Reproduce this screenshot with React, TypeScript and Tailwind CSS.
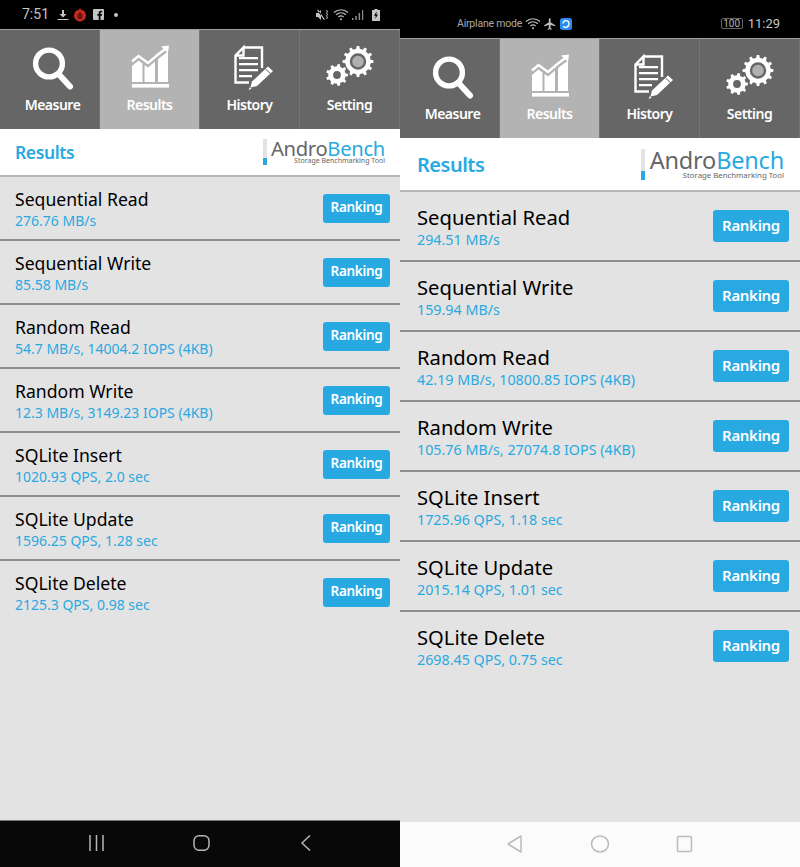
import type { ReactNode } from "react"

const font = "font-['Noto_Sans',sans-serif]"

// toothed outline for the settings gears
function gearPath(cx: number, cy: number, outer: number, inner: number, teeth: number) {
  const pts: string[] = []
  const step = (Math.PI * 2) / teeth
  for (let i = 0; i < teeth; i++) {
    const a = i * step
    const w = step * 0.2
    ;[
      [a - w * 1.3, inner],
      [a - w * 0.8, outer],
      [a + w * 0.8, outer],
      [a + w * 1.3, inner],
    ].forEach(([t, r]) => {
      pts.push(`${(cx + Math.cos(t) * r).toFixed(2)},${(cy + Math.sin(t) * r).toFixed(2)}`)
    })
  }
  return `M${pts.join("L")}Z`
}

function TabIcon({ children }: { children: ReactNode }) {
  return (
    <svg viewBox="0 0 100 64" className="h-16 w-[100px] shrink-0 text-white">
      {children}
    </svg>
  )
}

const MeasureIcon = () => (
  <TabIcon>
    <circle cx="49" cy="33.5" r="13.4" fill="none" stroke="currentColor" strokeWidth="5.4" />
    <path d="M59 44.5 L70 56.5" stroke="currentColor" strokeWidth="6" strokeLinecap="round" />
  </TabIcon>
)

const ResultsIcon = () => (
  <TabIcon>
    <path d="M32 31.5 L38.5 26 L48 33 L58 24.5 L66 18.5" fill="none" stroke="currentColor" strokeWidth="2.4" />
    <path d="M61 16.5 L69 15.5 L68 23 Z" fill="currentColor" />
    <path
      d="M32 36 L38.5 30.5 L42.5 33.5 V52 H32 Z M44.5 35 L48 37.5 L55 31.5 V52 H44.5 Z M58 29 L68 21.5 V52 H58 Z"
      fill="currentColor"
    />
    <rect x="32" y="54" width="37" height="3.6" fill="currentColor" />
  </TabIcon>
)

const HistoryIcon = () => (
  <TabIcon>
    <path
      d="M43.5 17.5 H62 V38 M49 52.5 H35.5 V25.5 L43.5 17.5 V25.5 H35.5"
      fill="none"
      stroke="currentColor"
      strokeWidth="2.4"
    />
    <path d="M39 27h19v2.2H39zM39 33h19v2.2H39zM39 39h19v2.2H39zM39 45h13v2.2H39z" fill="currentColor" />
    <path d="M68 36.5 L73 41 L57 56 L50.5 57.5 L52 51.5 Z" fill="currentColor" />
    <path d="M50 57 L48.5 60 L51.5 58.8 Z" fill="currentColor" />
    <path d="M65.5 39 L70.5 43.5" stroke="#666666" strokeWidth="1" />
  </TabIcon>
)

const SettingIcon = () => (
  <TabIcon>
    <path d={gearPath(58, 31.5, 15.5, 12.8, 12)} fill="currentColor" />
    <circle cx="58" cy="31.5" r="7" fill="#b0b0b0" stroke="#666666" strokeWidth="2.4" />
    <circle cx="37" cy="45" r="12.4" fill="#666666" />
    <path d={gearPath(37, 45, 11, 8.8, 9)} fill="currentColor" />
    <circle cx="37" cy="45" r="3.9" fill="#666666" />
  </TabIcon>
)

const tabs = [
  { label: "Measure", icon: MeasureIcon, labelClass: "pl-[6px]" },
  { label: "Results", icon: ResultsIcon, active: true, labelClass: "" },
  { label: "History", icon: HistoryIcon, labelClass: "" },
  { label: "Setting", icon: SettingIcon, labelClass: "" },
]

function TabBar() {
  return (
    <div className="flex h-[100px] shrink-0 border-t border-[#a0a0a0] bg-[#666666]">
      {tabs.map(({ label, icon: Icon, active, labelClass }) => (
        <div
          key={label}
          className={`flex w-[100px] flex-col items-center border-r border-[#757575] ${active ? "bg-[#b3b3b3]" : ""}`}
        >
          <Icon />
          <span className={`mt-[1px] text-[14px] leading-[20px] font-semibold tracking-[-0.5px] text-white ${labelClass}`}>
            {label}
          </span>
        </div>
      ))}
    </div>
  )
}

function Row({ title, value, large, last }: { title: string; value: string; large: boolean; last: boolean }) {
  return (
    <div
      className={`flex items-center justify-between border-b-2 ${last ? "border-transparent" : "border-[#8e8e8e]"} ${
        large ? "h-[70px] pr-[11px] pl-[17px]" : "h-16 pr-[10px] pl-[15px]"
      }`}
    >
      <div className="mt-[1px]">
        <div className={large ? "text-[20.2px] leading-[26px] text-black" : "text-[17.6px] leading-[23px] text-black"}>
          {title}
        </div>
        <div
          className={
            large ? "text-[14.3px] leading-[20px] text-[#29a9e1]" : "text-[14px] leading-[19px] text-[#29a9e1]"
          }
        >
          {value}
        </div>
      </div>
      <div
        className={`flex items-center justify-center rounded-[3px] bg-[#29a9e1] pb-[2px] font-semibold tracking-[-0.3px] text-white ${
          large ? "h-8 w-[76px] text-[15px]" : "h-[29px] w-[67px] text-[13.5px]"
        }`}
      >
        Ranking
      </div>
    </div>
  )
}

function Logo({ large }: { large: boolean }) {
  return (
    <div className="flex">
      <div className={`flex flex-col bg-[#e3e3e3] ${large ? "mr-[5px] h-[31px] w-1" : "mr-1 h-[26px] w-1"}`}>
        <div className={`mt-auto w-full bg-[#29a9e1] ${large ? "h-[9px]" : "h-[7px]"}`} />
      </div>
      <div className="flex flex-col items-end">
        <div
          className={`text-[#29a9e1] ${
            large ? "text-[23.5px] leading-[22px] tracking-[-0.2px]" : "text-[20.2px] leading-[18px] tracking-[-0.3px]"
          }`}
        >
          <span className="text-[#666666]">Andro</span>Bench
        </div>
        <div className={`text-[#666666] ${large ? "text-[7.8px] leading-[9px]" : "text-[7px] leading-[8px]"}`}>
          Storage Benchmarking Tool
        </div>
      </div>
    </div>
  )
}

function Wifi() {
  return (
    <svg viewBox="0 0 16 13" className="h-[13px] w-4" fill="none" stroke="#bdbdbd" strokeWidth="1.2">
      <path d="M1 4.500 C5 .8 11 .8 15 4.500" />
      <path d="M3.200 6.800 C6 4.200 10 4.200 12.800 6.800" />
      <path d="M5.400 9 C7 7.600 9 7.600 10.600 9" />
      <circle cx="8" cy="11.200" r="1" fill="#bdbdbd" stroke="none" />
    </svg>
  )
}

function LeftStatus() {
  return (
    <div className="flex h-[29px] shrink-0 items-center bg-black pr-5 pl-[22px] text-[14px] text-[#c4c4c4]">
      <span className="font-['Roboto',sans-serif]">7:51</span>
      <svg viewBox="0 0 12 12" className="ml-[8px] h-3 w-3" fill="#c4c4c4">
        <path d="M5 1h2v4h2.500L6 8.400 2.500 5H5zM.5 10h11v1H.5z" />
      </svg>
      <svg viewBox="0 0 14 14" className="ml-[4px] h-[14px] w-[14px]">
        <circle cx="7" cy="7.500" r="6" fill="#c62a1e" />
        <path d="M4.500 11V6.500L7 4l2.500 2.500V11z" fill="#6d120c" />
        <path d="M7 0.500v2" stroke="#c62a1e" strokeWidth="1.500" />
      </svg>
      <svg viewBox="0 0 11 11" className="ml-[6px] h-[11px] w-[11px]">
        <rect width="11" height="11" rx="1" fill="#c4c4c4" />
        <path
          d="M7.500 11V6.800h1.400l.2-1.700H7.500V4c0-.5.200-.8.800-.8h.9V1.700H8C6.500 1.700 5.700 2.600 5.700 4v1.100H4.400v1.700h1.300V11z"
          fill="#000"
        />
      </svg>
      <span className="ml-[10px] h-1 w-1 rounded-full bg-[#c4c4c4]" />
      <div className="ml-auto flex items-center">
        <svg viewBox="0 0 13 12" className="h-3 w-[13px]" fill="#c4c4c4">
          <path d="M0 4h2l3-3v10L2 8H0zM1 1l7 10 1-.6-7-10zM10 1l1 1.500-1 1.500 1 1.500-1 1.500 1 1.500-1 1.500h1l1-1.500-1-1.500 1-1.500-1-1.500 1-1.500-1-1.500z" />
        </svg>
        <div className="ml-[4px]">
          <Wifi />
        </div>
        <svg viewBox="0 0 12 12" className="ml-[3px] h-3 w-3" fill="#8a8a8a">
          <path d="M0 9h1.500v2H0zM3.300 7h1.500v4H3.300zM6.600 4h1.500v7H6.600zM10 1h1.200v10H10z" />
        </svg>
        <svg viewBox="0 0 8 12" className="ml-2 h-3 w-2">
          <path d="M2.500 0h3v1H8v11H0V1h2.500z" fill="#c4c4c4" />
          <path d="M4.800 2.200 2 6.800h1.800L3.200 10 6 5.400H4.200z" fill="#000" />
        </svg>
      </div>
    </div>
  )
}

function RightStatus() {
  return (
    <div className="flex h-[38px] shrink-0 items-center bg-black pt-[9px] pr-5 pl-[57px] text-[#a8a8a8]">
      <span className="font-['Roboto',sans-serif] text-[10.5px] tracking-[-0.2px]">Airplane mode</span>
      <div className="ml-[3px]">
        <Wifi />
      </div>
      <svg viewBox="0 0 24 24" className="ml-[2px] h-[14px] w-[14px]" fill="#bdbdbd">
        <path d="M21 16v-2l-8-5V3.500a1.500 1.500 0 0 0-3 0V9l-8 5v2l8-2.500V19l-2 1.500V22l3.500-1 3.500 1v-1.500L13 19v-5.500z" />
      </svg>
      <svg viewBox="0 0 12 12" className="ml-[3px] h-3 w-3">
        <rect width="12" height="12" rx="2.500" fill="#2a8cf0" />
        <path d="M3 5.500a3 3 0 1 1 4 3M3 8.500c2 1.500 4 1 5.500-.5" fill="none" stroke="#fff" strokeWidth="1.300" />
      </svg>
      <div className="ml-auto flex items-center">
        <span className="flex h-[11px] w-[22px] items-center justify-center rounded-[2px] border border-[#666666] font-['Roboto',sans-serif] text-[10px] leading-none text-[#b5b5b5]">
          100
        </span>
        <span className="ml-[5px] font-['Roboto',sans-serif] text-[13px] text-[#c4c4c4]">11:29</span>
      </div>
    </div>
  )
}

function LeftNav() {
  return (
    <div className="mt-auto flex h-[47px] shrink-0 items-center border-t border-[#777777] bg-[#080808] pb-[2px]">
      <svg viewBox="0 0 400 16" className="h-4 w-[400px]" fill="none" stroke="#b5b5b5" strokeWidth="1.500">
        <path d="M90 0v16M96.500 0v16M103 0v16" />
        <rect x="194" y=".8" width="15" height="14.500" rx="5" />
        <path d="M310 .5 302 8l8 7.500" />
      </svg>
    </div>
  )
}

function RightNav() {
  return (
    <div className="mt-auto flex h-[45px] shrink-0 items-center bg-[#fbfbfb] pb-[2px]">
      <svg viewBox="0 0 400 18" className="h-[18px] w-[400px]" fill="none" stroke="#bcbcbc" strokeWidth="1.500">
        <path d="M121 1 108 9l13 8z" strokeLinejoin="round" />
        <ellipse cx="200" cy="9" rx="8.500" ry="8" />
        <rect x="277.500" y="1.500" width="14" height="15" rx="1" />
      </svg>
    </div>
  )
}

const leftRows = [
  ["Sequential Read", "276.76 MB/s"],
  ["Sequential Write", "85.58 MB/s"],
  ["Random Read", "54.7 MB/s, 14004.2 IOPS (4KB)"],
  ["Random Write", "12.3 MB/s, 3149.23 IOPS (4KB)"],
  ["SQLite Insert", "1020.93 QPS, 2.0 sec"],
  ["SQLite Update", "1596.25 QPS, 1.28 sec"],
  ["SQLite Delete", "2125.3 QPS, 0.98 sec"],
]

const rightRows = [
  ["Sequential Read", "294.51 MB/s"],
  ["Sequential Write", "159.94 MB/s"],
  ["Random Read", "42.19 MB/s, 10800.85 IOPS (4KB)"],
  ["Random Write", "105.76 MB/s, 27074.8 IOPS (4KB)"],
  ["SQLite Insert", "1725.96 QPS, 1.18 sec"],
  ["SQLite Update", "2015.14 QPS, 1.01 sec"],
  ["SQLite Delete", "2698.45 QPS, 0.75 sec"],
]

function Phone({ large, rows }: { large: boolean; rows: string[][] }) {
  return (
    <div className="flex h-[867px] w-[400px] flex-col bg-[#e3e3e3]">
      {large ? <RightStatus /> : <LeftStatus />}
      <TabBar />
      <div
        className={`flex shrink-0 items-center justify-between border-b-2 border-[#b5b5b5] bg-white ${
          large ? "h-[54px] pr-[16px] pl-[17px]" : "h-[48px] pr-[15px] pl-[15px]"
        }`}
      >
        <span
          className={`font-semibold text-[#29a9e1] ${
            large ? "pt-[1px] text-[20px] tracking-[-0.5px]" : "text-[17.5px] tracking-[-0.4px]"
          }`}
        >
          Results
        </span>
        <Logo large={large} />
      </div>
      {rows.map(([title, value], index) => (
        <Row key={title} title={title} value={value} large={large} last={index === rows.length - 1} />
      ))}
      {large ? <RightNav /> : <LeftNav />}
    </div>
  )
}

export default function App() {
  return (
    <div className={`flex h-[867px] w-[800px] overflow-hidden ${font}`}>
      <Phone large={false} rows={leftRows} />
      <Phone large={true} rows={rightRows} />
    </div>
  )
}
